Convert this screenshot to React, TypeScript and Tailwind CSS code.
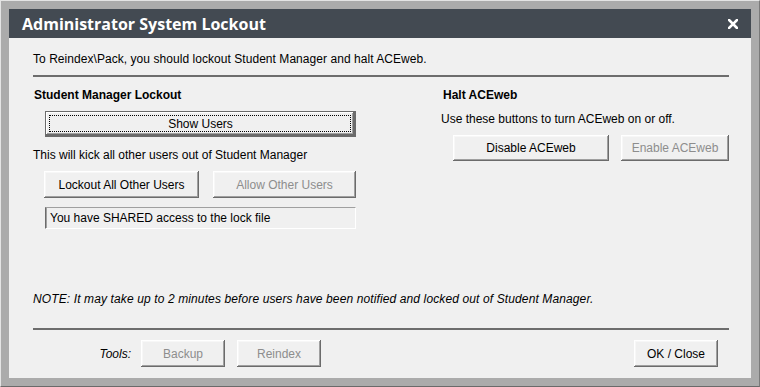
import React from 'react';

type BtnProps = {
  label: string;
  width: string;
  height?: string;
  disabled?: boolean;
  isDefault?: boolean;
};

// classic raised win32-ish push button
function PushButton({ label, width, height = 'h-[27px]', disabled, isDefault }: BtnProps) {
  return (
    <button
      type="button"
      className={`${width} ${height} relative shrink-0 bg-[#f0f0f0] text-[12px] leading-none ${
        disabled ? 'text-[#8d8d8d]' : 'text-black'
      } ${
        isDefault
          ? 'border border-[#6b6b6b] shadow-[inset_-2px_-2px_#6b6b6b,inset_1px_1px_#ffffff,inset_-3px_-3px_#a0a0a0]'
          : 'shadow-[inset_-1px_-1px_#6b6b6b,inset_1px_1px_#ffffff,inset_-2px_-2px_#a0a0a0,inset_2px_2px_#f7f7f7]'
      }`}
    >
      {isDefault && (
        <span className="absolute left-[3px] top-[3px] right-[4px] bottom-[4px] border border-dotted border-black" />
      )}
      <span className="relative">{label}</span>
    </button>
  );
}

function CloseIcon() {
  return (
    <svg width="10" height="10" viewBox="0 0 10 10" className="block">
      <path d="M1 1 L9 9 M9 1 L1 9" stroke="#ffffff" strokeWidth="2.6" strokeLinecap="square" />
    </svg>
  );
}

export default function App() {
  return (
    <div
      className="w-[760px] h-[387px] bg-[#ababab] border-t border-l border-[#e4e4e4] border-r border-b border-r-[#7a7a7a] border-b-[#6a6a6a] pt-[8px] pl-[8px] pr-[8px] pb-[8px] flex"
      style={{ fontFamily: '"Liberation Sans", Arial, sans-serif' }}
    >
      <div className="flex-1 flex flex-col bg-[#f0f0f0]">
        {/* title bar */}
        <div className="h-[29px] bg-[#434a52] flex items-center pl-[13px] pr-[13px]">
          <h1
            className="text-white text-[16px] font-bold pt-px"
            style={{ fontFamily: '"Open Sans", "DejaVu Sans", sans-serif' }}
          >
            Administrator System Lockout
          </h1>
          <div className="ml-auto">
            <CloseIcon />
          </div>
        </div>

        <div className="flex-1 flex flex-col pl-[24px] text-[12px] leading-[14px] text-black">
          <p className="mt-[14px] tracking-[0.05px]">To Reindex\Pack, you should lockout Student Manager and halt ACEweb.</p>
          <div className="mt-[9px] h-[2px] w-[696px] bg-[#6d6d6d]" />

          <div className="flex flex-1">
            {/* left column */}
            <div className="w-[324px] flex flex-col">
              <h2 className="mt-[11px] pl-px font-bold">Student Manager Lockout</h2>
              <div className="mt-[9px] ml-[12px]">
                <PushButton label="Show Users" width="w-[311px]" height="h-[26px]" isDefault />
              </div>
              <p className="mt-[11px]">This will kick all other users out of Student Manager</p>
              <div className="mt-[9px] ml-[11px] flex gap-[14px]">
                <PushButton label="Lockout All Other Users" width="w-[155px]" />
                <PushButton label="Allow Other Users" width="w-[143px]" disabled />
              </div>
              <div className="mt-[9px] ml-[12px] w-[311px] h-[22px] flex items-center pl-[4px] bg-[#f0f0f0] border-t border-l border-t-[#a0a0a0] border-l-[#6b6b6b] border-b border-r border-[#ffffff] shadow-[inset_1px_0_#a0a0a0]">
                You have SHARED access to the lock file
              </div>
            </div>

            {/* right column */}
            <div className="ml-[84px] flex flex-col">
              <h2 className="mt-[11px] pl-[2px] font-bold">Halt ACEweb</h2>
              <p className="mt-[10px]">Use these buttons to turn ACEweb on or off.</p>
              <div className="mt-[9px] ml-[12px] flex gap-[12px]">
                <PushButton label="Disable ACEweb" width="w-[156px]" height="h-[26px]" />
                <PushButton label="Enable ACEweb" width="w-[108px]" height="h-[26px]" disabled />
              </div>
            </div>
          </div>

          <p className="italic tracking-[0.12px]">
            NOTE: It may take up to 2 minutes before users have been notified and locked out of Student Manager.
          </p>
          <div className="mt-[22px] h-[2px] w-[696px] bg-[#6d6d6d]" />

          <div className="mt-[10px] mb-[11px] flex items-center pr-[33px]">
            <span className="w-[98px] text-right italic">Tools:</span>
            <div className="ml-[10px] flex gap-[12px]">
              <PushButton label="Backup" width="w-[84px]" disabled />
              <PushButton label="Reindex" width="w-[84px]" disabled />
            </div>
            <div className="ml-auto">
              <PushButton label="OK / Close" width="w-[84px]" />
            </div>
          </div>
        </div>
      </div>
    </div>
  );
}
